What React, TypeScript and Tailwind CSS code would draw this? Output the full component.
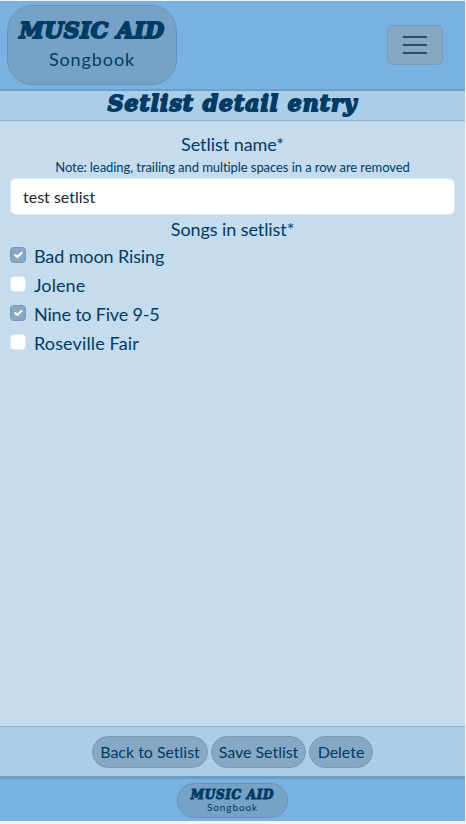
const songs = [
  { name: 'Bad moon Rising', checked: true, tracking: 'tracking-[-0.12px]' },
  { name: 'Jolene', checked: false, tracking: 'tracking-[0.08px]' },
  { name: 'Nine to Five 9-5', checked: true, tracking: 'tracking-[-0.19px]' },
  { name: 'Roseville Fair', checked: false, tracking: 'tracking-[0.14px]' },
];

const display =
  "font-['DejaVu_Serif',serif] font-bold italic whitespace-nowrap [-webkit-text-stroke-color:#003b64]";

function Check() {
  return (
    <svg viewBox="0 0 20 20" className="h-full w-full" fill="none" stroke="#fff" strokeWidth="3" strokeLinecap="round" strokeLinejoin="round">
      <path d="m6 10 3 3 6-6" />
    </svg>
  );
}

export default function App() {
  return (
    <div className="h-[824px] w-[466px] bg-[#edf5fb] pt-px font-[Lato,sans-serif] text-[#003b64] [font-variant-ligatures:none]">
      <div className="flex h-[820px] w-[465px] flex-col bg-[#c5dbee]">
        <header className="flex h-[90px] shrink-0 items-start justify-between border-b-2 border-[#6b9fc9] bg-[#79b2e0] pl-[7px] pr-[22px] pt-1">
          <div className="flex h-20 w-[170px] flex-col items-center rounded-[26px] border border-[#6594bb] bg-[#76a2c8]">
            <div className={`${display} mt-[10px] text-[22px] leading-7 tracking-[0.4px] [-webkit-text-stroke-width:1.9px]`}>MUSIC AID</div>
            <div className="mt-[2px] text-[18px] leading-[27px] tracking-[0.9px]">Songbook</div>
          </div>
          <button className="mt-5 flex h-10 w-14 flex-col items-center justify-center gap-[6px] rounded-[6px] border border-[#7799b8] bg-[#87a8c5]">
            <span className="h-0.5 w-6 bg-[#314b60]" />
            <span className="h-0.5 w-6 bg-[#314b60]" />
            <span className="h-0.5 w-6 bg-[#314b60]" />
          </button>
        </header>
        <div className="flex h-[30px] shrink-0 justify-center border-b border-[#92b3cf] bg-[#aacde8]">
          <h1 className={`${display} text-[22px] leading-[25px] tracking-[1px] [-webkit-text-stroke-width:1.8px]`}>Setlist detail entry</h1>
        </div>
        <main className="flex-1 px-[10px] pt-[10px]">
          <label className="block text-center text-[18px] leading-[27px] tracking-[-0.05px]">Setlist name*</label>
          <p className="text-center text-[13px] leading-[19px] tracking-[-0.07px]">Note: leading, trailing and multiple spaces in a row are removed</p>
          <div className="mt-px flex h-[37px] items-center rounded-[6px] border border-[#dee8f0] bg-white px-3 text-[16px] text-[#212529]">test setlist</div>
          <div className="mt-px text-center text-[18px] leading-[27px] tracking-[-0.08px]">Songs in setlist*</div>
          {songs.map((song) => (
            <label key={song.name} className={`flex h-[29px] items-start text-[18px] leading-[27px] ${song.tracking}`}>
              <span className={`mt-1 mr-2 h-4 w-4 shrink-0 rounded-[4px] border ${song.checked ? 'border-[#7799b8] bg-[#87a8c5]' : 'border-[#dee8f0] bg-white'}`}>
                {song.checked && <Check />}
              </span>
              {song.name}
            </label>
          ))}
        </main>
        <div className="flex h-[50px] shrink-0 justify-center gap-[3px] border-t border-[#92b3cf] bg-[#aacde8] pt-[9px] text-[16px] tracking-[-0.03px]">
          <button className="h-8 w-[116px] rounded-full border border-[#7799b8] bg-[#87a8c5]">Back to Setlist</button>
          <button className="h-8 w-[95px] rounded-full border border-[#7799b8] bg-[#87a8c5]">Save Setlist</button>
          <button className="h-8 w-16 rounded-full border border-[#7799b8] bg-[#87a8c5]">Delete</button>
        </div>
        <footer className="flex h-[45px] shrink-0 justify-center border-t-[3px] border-[#6b9fc9] bg-[#79b2e0] pt-1">
          <div className="flex h-[35px] w-[111px] flex-col items-center rounded-full border border-[#6594bb] bg-[#76a2c8]">
            <div className={`${display} mt-[4px] text-[12px] leading-[15px] tracking-[0.7px] [-webkit-text-stroke-width:1px]`}>MUSIC AID</div>
            <div className="-mt-[2px] text-[10px] leading-[12px] tracking-[0.9px]">Songbook</div>
          </div>
        </footer>
      </div>
    </div>
  );
}
